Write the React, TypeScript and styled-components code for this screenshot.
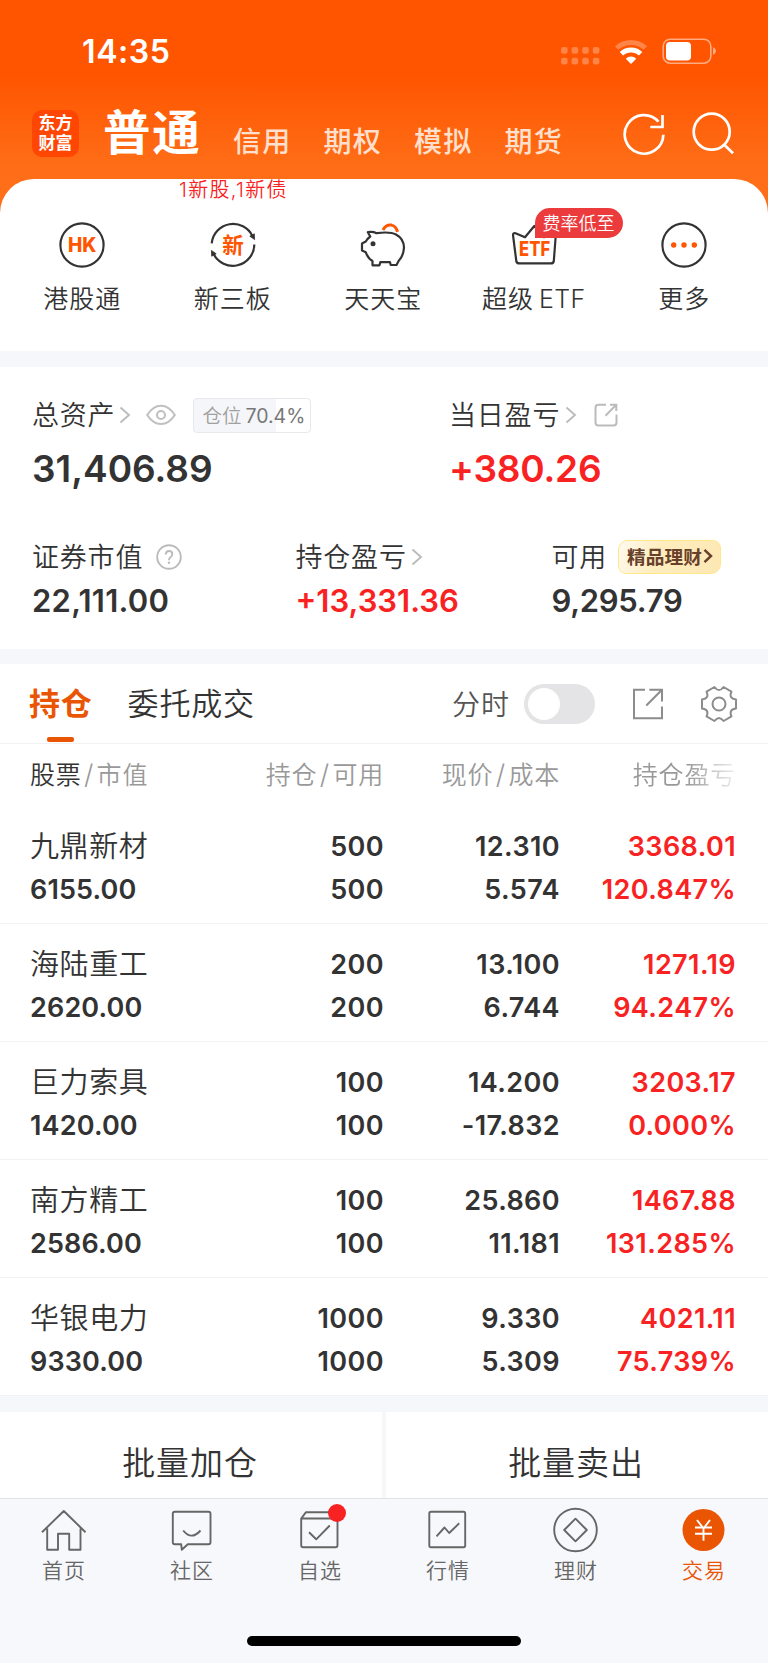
import React from 'react';
import styled, { createGlobalStyle } from 'styled-components';

const CJK = '"Noto Sans CJK SC", sans-serif';
const NUM = 'Inter, "Noto Sans CJK SC", sans-serif';
const INK = '#333';
const MUTED = '#999';
const RED = '#f92222';
const BRAND = '#ff5500';
const ACTIVE = '#ea5504';
const BAND = '#f5f7fa';

const GlobalStyle = createGlobalStyle`
  * { box-sizing: border-box; }
  body { margin: 0; background: #fff; font-family: ${CJK}; color: ${INK}; }
  svg { display: block; flex: none; }
`;

const Screen = styled.div`
  width: 768px;
  height: 1663px;
  display: flex;
  flex-direction: column;
  overflow: hidden;
  background: linear-gradient(#ff5500 0, #ff5500 76px, #ff6d17 165px, #ff7019 220px);
`;

/* ---------- status bar ---------- */
const StatusBar = styled.div`
  height: 103px;
  display: flex;
  align-items: center;
  justify-content: space-between;
  padding: 0 51px 0 82px;
`;
const Clock = styled.span`
  font: 600 32px/40px ${NUM};
  color: #fff;
  letter-spacing: 0.6px;
`;
const StatusIcons = styled.div`
  display: flex;
  align-items: center;
`;

/* ---------- header ---------- */
const Header = styled.header`
  height: 76px;
  display: flex;
  align-items: flex-start;
  padding: 0 33px 0 32px;
`;
const Logo = styled.div`
  width: 47px;
  height: 47px;
  margin: 7px 24px 0 0;
  padding: 2px 0 0 0;
  border-radius: 10px;
  background: #ff4603;
  color: #fff;
  font: 700 17px/20px ${CJK};
  text-align: center;
`;
const MainTab = styled.span`
  font: 600 47.5px/56px ${CJK};
  letter-spacing: 1.8px;
  color: #fff;
  width: 130px;
  margin-top: -1px;
`;
const SubTab = styled.span`
  font: 500 28px/40px ${CJK};
  letter-spacing: 1.2px;
  color: #ffe0cf;
  width: 90.5px;
  margin-top: 17px;
`;
const HeaderIcons = styled.div`
  display: flex;
  margin: 7px 0 0 auto;
  gap: 25px;
`;

/* ---------- quick actions ---------- */
const Sheet = styled.section`
  position: relative;
  height: 172px;
  padding: 43px 7px 0;
  background: #fff;
  border-radius: 34px 34px 0 0;
`;
const Notice = styled.span`
  position: absolute;
  top: -2px;
  left: 179px;
  font: 350 20px/26px ${NUM};
  letter-spacing: 1.3px;
  color: ${RED};
`;
const Actions = styled.div`
  display: grid;
  grid-template-columns: repeat(5, 150.5px);
`;
const Action = styled.div`
  position: relative;
  display: flex;
  flex-direction: column;
  align-items: center;
`;
const ActionLabel = styled.span`
  font: 350 25px/36px ${CJK};
  letter-spacing: 1px;
  margin-top: 11px;
  white-space: nowrap;
`;
const Latin = styled.span`
  font-family: Inter, sans-serif;
  margin-left: 5px;
  letter-spacing: 0.4px;
`;
const Badge = styled.span`
  position: absolute;
  left: 76px;
  top: -14px;
  height: 30px;
  width: 88px;
  border-radius: 15px 15px 15px 0;
  background: #ec3b3d;
  color: #fff;
  font: 350 18px/28px ${CJK};
  text-align: center;
`;

const Band = styled.div<{ $h: number }>`
  height: ${p => p.$h}px;
  flex: none;
  background: ${BAND};
`;

/* ---------- assets ---------- */
const Assets = styled.section`
  height: 282px;
  padding: 29px 33px 0 32px;
  background: #fff;
`;
const AssetRow = styled.div<{ $columns: string; $top?: number }>`
  display: grid;
  grid-template-columns: ${p => p.$columns};
  margin-top: ${p => p.$top ?? 0}px;
`;
const LabelLine = styled.div`
  height: 38px;
  display: flex;
  align-items: center;
`;
const Label = styled.span`
  font: 350 27px/38px ${CJK};
  letter-spacing: 0.8px;
  margin-top: -3px;
  white-space: nowrap;
`;
const Gap = styled.i<{ $w: number }>`
  flex: none;
  width: ${p => p.$w}px;
`;
const Figure = styled.div<{ $big?: boolean; $up?: boolean; $track?: number }>`
  font: 600 ${p => (p.$big ? 37 : 31)}px / ${p => (p.$big ? 44 : 38)}px ${NUM};
  letter-spacing: ${p => p.$track ?? 0}px;
  margin-top: ${p => (p.$big ? 13 : 6)}px;
  color: ${p => (p.$up ? RED : INK)};
`;
const PositionTag = styled.span`
  display: flex;
  align-items: center;
  width: 118px;
  height: 35px;
  margin-top: 1px;
  padding-left: 8px;
  border: 1px solid #e6e8eb;
  border-radius: 4px;
  background: linear-gradient(90deg, #f5f6f9 70.4%, #fff 70.4%);
  font: 400 19.5px/30px ${NUM};
  color: #777;
  white-space: nowrap;
`;
const TagName = styled.span`
  font-family: ${CJK};
  font-weight: 350;
  color: #a0a0a0;
  width: 43px;
  margin-top: -2px;
`;
const WealthBadge = styled.span`
  display: flex;
  align-items: center;
  width: 103px;
  height: 34px;
  padding: 0 0 2px 8px;
  border: 1.5px solid #ffe88a;
  border-radius: 10px 8px 10px 8px;
  background: linear-gradient(110deg, #fffaf0, #ffedbe 40%, #fde8b4);
  font: 700 18.7px/28px ${CJK};
  color: #69402a;
  white-space: nowrap;
`;

/* ---------- holdings ---------- */
const TabRow = styled.div`
  height: 80px;
  display: flex;
  align-items: center;
  padding: 0 30px 0 29px;
  background: #fff;
  border-bottom: 1px solid #f1f2f4;
`;
const Tab = styled.span<{ $active?: boolean }>`
  position: relative;
  font: ${p => (p.$active ? 700 : 350)} 31px/78px ${CJK};
  letter-spacing: 0.8px;
  color: ${p => (p.$active ? ACTIVE : INK)};
  margin-right: ${p => (p.$active ? 35 : 0)}px;
  margin-top: -3px;
  &::after {
    content: '';
    display: ${p => (p.$active ? 'block' : 'none')};
    position: absolute;
    left: 17.5px;
    bottom: -1px;
    width: 27px;
    height: 5.5px;
    border-radius: 2px;
    background: ${ACTIVE};
  }
`;
const SwitchLabel = styled.span`
  font: 350 28px/40px ${CJK};
  letter-spacing: 1px;
  color: #555;
  margin: -2px 14px 0 auto;
`;
const Switch = styled.span`
  width: 71px;
  height: 40px;
  padding: 4px;
  border-radius: 20px;
  background: #e4e4e6;
  margin-right: 37px;
  &::before {
    content: '';
    display: block;
    width: 32px;
    height: 32px;
    border-radius: 50%;
    background: #fff;
  }
`;
const Columns = styled.div`
  display: grid;
  grid-template-columns: 177px 177px 176px 176px;
  padding: 0 32px 0 30px;
  background: #fff;
`;
const TableHead = styled(Columns)`
  height: 62px;
  padding-top: 11px;
  font: 350 25px/36px ${CJK};
  letter-spacing: 0.8px;
  color: ${MUTED};
`;
const HeadCell = styled.span<{ $left?: boolean; $fade?: boolean }>`
  text-align: ${p => (p.$left ? 'left' : 'right')};
  mask-image: ${p => (p.$fade ? 'linear-gradient(90deg, #000 72%, rgba(0,0,0,.15) 100%)' : 'none')};
`;
const Strong = styled.span`
  color: ${INK};
`;
const Slash = styled.span`
  display: inline-block;
  width: 15px;
  text-align: center;
  font: 300 27px/30px Inter, sans-serif;
`;
const StockRow = styled(Columns)`
  height: 118px;
  padding-top: 19px;
  border-bottom: 1px solid #f1f2f4;
`;
const Cell = styled.div<{ $up?: boolean; $left?: boolean }>`
  font: 600 27px/43px ${NUM};
  letter-spacing: ${p => (p.$left ? 0.15 : 0.4)}px;
  text-align: ${p => (p.$left ? 'left' : 'right')};
  color: ${p => (p.$up ? RED : INK)};
`;
const StockName = styled.div`
  font: 350 29px/43px ${CJK};
  letter-spacing: 0.6px;
  margin: -2px 0 2px;
`;

/* ---------- batch buttons ---------- */
const BatchRow = styled.div`
  height: 86px;
  flex: none;
  display: grid;
  grid-template-columns: 1fr 1fr;
  gap: 4px;
  background: ${BAND};
`;
const BatchButton = styled.div`
  background: #fff;
  font: 350 33px/98px ${CJK};
  letter-spacing: 0.9px;
  text-align: center;
  padding-right: 2px;
`;

/* ---------- bottom navigation ---------- */
const BottomNav = styled.nav`
  height: 165px;
  flex: none;
  display: flex;
  flex-direction: column;
  align-items: center;
  justify-content: space-between;
  padding-bottom: 17px;
  border-top: 1px solid #e2e3e6;
  background: #f7f8fb;
`;
const NavItems = styled.div`
  display: grid;
  grid-template-columns: repeat(6, 128px);
`;
const NavItem = styled.div<{ $active?: boolean }>`
  display: flex;
  flex-direction: column;
  align-items: center;
  padding-top: 8px;
  font: 350 21px/30px ${CJK};
  letter-spacing: 1.1px;
  color: ${p => (p.$active ? ACTIVE : '#666')};
  gap: 1px;
`;
const NavIconWrap = styled.span<{ $dot?: boolean }>`
  position: relative;
  &::after {
    content: '';
    display: ${p => (p.$dot ? 'block' : 'none')};
    position: absolute;
    right: -3px;
    top: -3px;
    width: 18px;
    height: 18px;
    border-radius: 50%;
    background: ${RED};
  }
`;
const HomeIndicator = styled.div`
  width: 274px;
  height: 10px;
  border-radius: 5px;
  background: #000;
`;

/* ---------- icons ---------- */
const SignalDots = () => (
  <svg width="40" height="26" viewBox="0 0 40 26" fill="#fff" opacity=".28">
    {[0, 10.6, 21.2, 31.8].map(x =>
      [8, 18.7].map(y => <rect key={`${x}-${y}`} x={x} y={y} width="6.6" height="6.8" rx="2.2" />),
    )}
  </svg>
);
const Wifi = () => (
  <svg width="36" height="26" viewBox="0 0 36 26" fill="none" stroke="#fff">
    <path d="M3.6 9.1A21.3 21.3 0 0 1 32.4 9.1" strokeWidth="4.8" opacity=".28" />
    <path d="M8.4 14.8A14 14 0 0 1 27.6 14.8" strokeWidth="4.8" />
    <path d="M18 24.9 12.8 19.7A7.5 7.5 0 0 1 23.2 19.7Z" fill="#fff" stroke="none" />
  </svg>
);
const Battery = () => (
  <svg width="55" height="28" viewBox="0 0 55 28">
    <rect x="1.2" y="1.2" width="47.6" height="24" rx="7" fill="none" stroke="#fff" strokeWidth="1.6" opacity=".5" />
    <rect x="4" y="4" width="25" height="18.4" rx="4" fill="#fff" />
    <path d="M51 9Q54 10.5 54 13T51 17Z" fill="#fff" opacity=".5" />
  </svg>
);
const Refresh = () => (
  <svg width="44" height="46" viewBox="0 0 44 46" fill="none" stroke="#fff" strokeWidth="2.7">
    <path d="M41.3 24.7A19.3 19.3 0 1 1 36.5 11.6" />
    <path d="M40.5 5V17H28.3" />
  </svg>
);
const Search = () => (
  <svg width="44" height="46" viewBox="0 0 44 46" fill="none" stroke="#fff" strokeWidth="2.7">
    <circle cx="20.7" cy="21.7" r="18" />
    <path d="M33 34.5 42 43.3" />
  </svg>
);

const ActionSvg = ({ children }: { children: React.ReactNode }) => (
  <svg width="46" height="46" viewBox="0 0 46 46" fill="none" stroke={INK} strokeWidth="2.2" strokeLinejoin="round">
    {children}
  </svg>
);
const HkIcon = () => (
  <ActionSvg>
    <circle cx="23" cy="23" r="21.6" />
    <text x="23.2" y="30" textAnchor="middle" textLength="28.5" lengthAdjust="spacingAndGlyphs" fontFamily="Inter" fontWeight="800" fontSize="20" fill={BRAND} stroke="none">HK</text>
  </ActionSvg>
);
const NewBoardIcon = () => (
  <ActionSvg>
    <path d="M1.7 21.3A21.5 21.5 0 0 1 42.5 14.2M44.3 22.5A21.5 21.5 0 0 1 3.5 31.8" />
    <path d="M39.8 14.2 44.3 11.8 44.6 17.6ZM6.2 31.8 1.7 34.2 1.4 28.4Z" fill={INK} strokeWidth="0.8" />
    <text x="23" y="30.7" textAnchor="middle" fontFamily="Noto Sans CJK SC" fontWeight="700" fontSize="21.5" fill={BRAND} stroke="none">新</text>
  </ActionSvg>
);
const PiggyIcon = () => (
  <ActionSvg>
    <path d="M2 21.5 5.8 19.5Q7.5 16.5 10.3 14.5L7.8 10.2Q13 9.3 16.5 11.2 30 9.3 36 12.5 43.8 16.7 44 25.5 43.5 34 38.6 39L36.5 43H30.7L30 40.2H20.3L19.5 43.3H12.5V39Q8 36.5 5.8 30.3L2 28.5Z" />
    <circle cx="13" cy="21.7" r="2.5" fill={INK} stroke="none" />
    <path d="M23 8Q26 2.3 31.5 3.1 36 4 37.5 9.8" stroke={BRAND} strokeWidth="3" />
  </ActionSvg>
);
const EtfIcon = () => (
  <ActionSvg>
    <path d="M14 15.3 23.3 4 33 15.3 42.5 11Q45 10.5 44.8 13L42.8 39Q42.5 41.4 40 41.4H8.3Q5.6 41.4 5.3 39L2 13Q2 10.5 4.5 11.2Z" />
    <text x="23.6" y="34.3" textAnchor="middle" textLength="31" lengthAdjust="spacingAndGlyphs" fontFamily="Inter" fontWeight="800" fontSize="20" fill={BRAND} stroke="none">ETF</text>
  </ActionSvg>
);
const MoreIcon = () => (
  <ActionSvg>
    <circle cx="23" cy="23" r="21.6" />
    <g fill={BRAND} stroke="none">
      <circle cx="12.7" cy="23" r="2.7" />
      <circle cx="23" cy="23" r="2.7" />
      <circle cx="33.3" cy="23" r="2.7" />
    </g>
  </ActionSvg>
);

const Chevron = () => (
  <svg width="12" height="18" viewBox="0 0 12 18" fill="none" stroke="#bbb" strokeWidth="1.9">
    <path d="M1.5 1.5 10 9 1.5 16.5" />
  </svg>
);
const Eye = () => (
  <svg width="30" height="22" viewBox="0 0 30 22" fill="none" stroke="#c0c0c0" strokeWidth="2.1">
    <path d="M1.2 11Q7 1.700 15 1.700T28.8 11Q23 20 15 20T1.2 11Z" />
    <circle cx="15" cy="11" r="4" />
  </svg>
);
const ShareSmall = () => (
  <svg width="24" height="24" viewBox="0 0 24 24" fill="none" stroke="#bbb" strokeWidth="2">
    <path d="M12 1.7H4.5Q1.5 1.7 1.5 4.7V19.5Q1.5 22.5 4.5 22.5H19.5Q22.5 22.5 22.5 19.5V11.5M16 1.7H22.3V8M22 2 11.5 12.8" />
  </svg>
);
const Help = () => (
  <svg width="26" height="26" viewBox="0 0 26 26" fill="none" stroke="#bbb" strokeWidth="1.9">
    <circle cx="13" cy="13" r="11.8" />
    <path d="M9.7 10.5Q9.7 7 13 7T16.3 10.2Q16.3 12 14.5 13.2 13 14.2 13 16.2" />
    <circle cx="13" cy="18.7" r="1.2" fill="#bbb" stroke="none" />
  </svg>
);
const BadgeArrow = () => (
  <svg width="10" height="16" viewBox="0 0 10 16" fill="none" stroke="#69402a" strokeWidth="2.5">
    <path d="M1.5 1.800 8 8 1.5 14.2" />
  </svg>
);
const ShareLarge = () => (
  <svg width="32" height="32" viewBox="0 0 32 32" fill="none" stroke="#8c8c8c" strokeWidth="2">
    <path d="M13 1.8H2V30.3H30V18.5M17.3 1.8H30V13.5M30 1.8 14.3 17.5" />
  </svg>
);
const gearPoint = (deg: number, r: number) => {
  const a = (deg * Math.PI) / 180;
  return `${(19 + r * Math.cos(a)).toFixed(2)} ${(19 + r * Math.sin(a)).toFixed(2)}`;
};
const gearPath =
  [0, 60, 120, 180, 240, 300]
    .map((a, i) => `${i ? 'L' : 'M'}${gearPoint(a - 15, 17.6)} L${gearPoint(a + 15, 17.6)} Q${gearPoint(a + 30, 10.8)} ${gearPoint(a + 45, 17.6)}`)
    .join(' ') + 'Z';
const Gear = () => (
  <svg width="38" height="38" viewBox="0 0 38 38" fill="none" stroke="#8c8c8c" strokeWidth="2" strokeLinejoin="round">
    <path d={gearPath} />
    <circle cx="19" cy="19" r="6.5" />
  </svg>
);

const NavSvg = ({ children }: { children: React.ReactNode }) => (
  <svg width="46" height="46" viewBox="-22.5 -23 46 46" fill="none" stroke="#666" strokeWidth="1.9" strokeLinejoin="round">
    {children}
  </svg>
);
const navItems = [
  { label: '首页', icon: <path d="M-21.5 2.2 0.3-19 22 2.2M-16.3-1.5V19.8H-5.5V3.7H5.7V19.8H17V-1.5" /> },
  { label: '社区', icon: <path d="M-16.7-18.3H17Q19-18.3 19-16.3V12.3Q19 14.3 17 14.3H-3.7L-9.7 19.8-10.3 14.3H-16.7Q-18.7 14.3-18.7 12.3V-16.3Q-18.7-18.3-16.7-18.3ZM-8.3 0.5Q0 10.8 9 0.5" /> },
  { label: '自选', dot: true, icon: <path d="M-18.3-11.5V15.3Q-18.3 17.3-16.3 17.3H16Q18 17.3 18 15.3V-11.5H-18.3L-13.5-17.8H14L18-11.5M-10.5 2.3-3.3 9.3 10.3-4.5" /> },
  { label: '行情', icon: <path d="M-16.5-18.3H16Q17.7-18.3 17.7-16.5V15.5Q17.7 17.3 16 17.3H-16.5Q-18.2 17.3-18.2 15.5V-16.5Q-18.2-18.3-16.5-18.3ZM-11 6.3-3-2.5 1.7 3 11.7-6.7" /> },
  { label: '理财', icon: <><circle r="21.3" /><path d="M0-11.3 11.3 0 0 11.3-11.3 0Z" /></> },
  { label: '交易', active: true, icon: <><circle r="21" fill={ACTIVE} stroke="none" /><path d="M-6.5-10 0-1.5 6.5-10M0-2V10.8M-8.5-2.5H8.5M-8.5 3.8H8.5" stroke="#fff" /></> },
];

const stocks = [
  ['九鼎新材', '6155.00', '500', '500', '12.310', '5.574', '3368.01', '120.847%'],
  ['海陆重工', '2620.00', '200', '200', '13.100', '6.744', '1271.19', '94.247%'],
  ['巨力索具', '1420.00', '100', '100', '14.200', '-17.832', '3203.17', '0.000%'],
  ['南方精工', '2586.00', '100', '100', '25.860', '11.181', '1467.88', '131.285%'],
  ['华银电力', '9330.00', '1000', '1000', '9.330', '5.309', '4021.11', '75.739%'],
];

export default function App() {
  return (
    <Screen>
      <GlobalStyle />
      <StatusBar>
        <Clock>14:35</Clock>
        <StatusIcons>
          <SignalDots />
          <Gap $w={12} />
          <Wifi />
          <Gap $w={13} />
          <Battery />
        </StatusIcons>
      </StatusBar>
      <Header>
        <Logo>东方<br />财富</Logo>
        <MainTab>普通</MainTab>
        {['信用', '期权', '模拟', '期货'].map(t => <SubTab key={t}>{t}</SubTab>)}
        <HeaderIcons><Refresh /><Search /></HeaderIcons>
      </Header>

      <Sheet>
        <Notice>1新股,1新债</Notice>
        <Actions>
          <Action><HkIcon /><ActionLabel>港股通</ActionLabel></Action>
          <Action><NewBoardIcon /><ActionLabel>新三板</ActionLabel></Action>
          <Action><PiggyIcon /><ActionLabel>天天宝</ActionLabel></Action>
          <Action><EtfIcon /><Badge>费率低至</Badge><ActionLabel>超级<Latin>ETF</Latin></ActionLabel></Action>
          <Action><MoreIcon /><ActionLabel>更多</ActionLabel></Action>
        </Actions>
      </Sheet>
      <Band $h={16} />

      <Assets>
        <AssetRow $columns="417px 1fr">
          <div>
            <LabelLine>
              <Label>总资产</Label><Gap $w={4} /><Chevron /><Gap $w={15} /><Eye /><Gap $w={17} />
              <PositionTag><TagName>仓位</TagName>70.4%</PositionTag>
            </LabelLine>
            <Figure $big>31,406.89</Figure>
          </div>
          <div>
            <LabelLine><Label>当日盈亏</Label><Gap $w={5} /><Chevron /><Gap $w={17} /><ShareSmall /></LabelLine>
            <Figure $big $up $track={-0.2}>+380.26</Figure>
          </div>
        </AssetRow>
        <AssetRow $columns="263.5px 256px 1fr" $top={47}>
          <div>
            <LabelLine><Label>证券市值</Label><Gap $w={13} /><Help /></LabelLine>
            <Figure $track={0.25}>22,111.00</Figure>
          </div>
          <div>
            <LabelLine><Label>持仓盈亏</Label><Gap $w={4} /><Chevron /></LabelLine>
            <Figure $up>+13,331.36</Figure>
          </div>
          <div>
            <LabelLine><Label>可用</Label><Gap $w={11} /><WealthBadge>精品理财<Gap $w={1} /><BadgeArrow /></WealthBadge></LabelLine>
            <Figure $track={-0.3}>9,295.79</Figure>
          </div>
        </AssetRow>
      </Assets>
      <Band $h={15} />

      <TabRow>
        <Tab $active>持仓</Tab>
        <Tab>委托成交</Tab>
        <SwitchLabel>分时</SwitchLabel>
        <Switch />
        <ShareLarge />
        <Gap $w={36} />
        <Gear />
      </TabRow>
      <TableHead>
        <HeadCell $left><Strong>股票</Strong><Slash>/</Slash>市值</HeadCell>
        <HeadCell>持仓<Slash>/</Slash>可用</HeadCell>
        <HeadCell>现价<Slash>/</Slash>成本</HeadCell>
        <HeadCell $fade>持仓盈亏</HeadCell>
      </TableHead>
      {stocks.map(([name, value, held, usable, price, cost, gain, rate]) => (
        <StockRow key={name}>
          <Cell $left><StockName>{name}</StockName>{value}</Cell>
          <Cell>{held}<br />{usable}</Cell>
          <Cell>{price}<br />{cost}</Cell>
          <Cell $up>{gain}<br />{rate}</Cell>
        </StockRow>
      ))}
      <Band $h={16} />

      <BatchRow>
        <BatchButton>批量加仓</BatchButton>
        <BatchButton>批量卖出</BatchButton>
      </BatchRow>

      <BottomNav>
        <NavItems>
          {navItems.map(n => (
            <NavItem key={n.label} $active={n.active}>
              <NavIconWrap $dot={n.dot}><NavSvg>{n.icon}</NavSvg></NavIconWrap>
              {n.label}
            </NavItem>
          ))}
        </NavItems>
        <HomeIndicator />
      </BottomNav>
    </Screen>
  );
}
